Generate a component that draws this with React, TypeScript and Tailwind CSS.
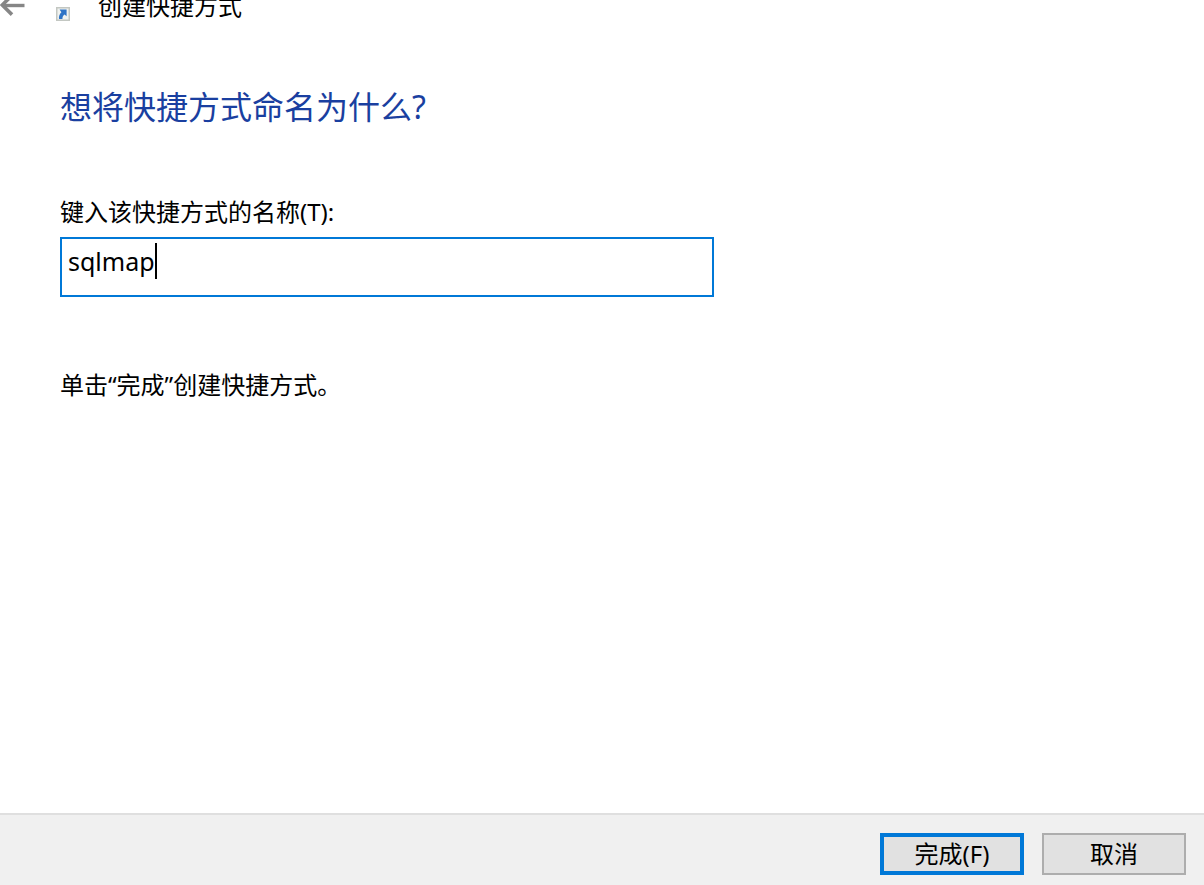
import { useState } from "react";

function BackArrow() {
  return (
    <svg width="26" height="20" viewBox="0 0 26 20" fill="none" stroke="#868686" className="block" aria-hidden="true">
      <path d="M24.5 5.5H3" strokeWidth="3.4" />
      <path d="M12.5 -5L2.2 5L12 14.6" strokeWidth="3.6" />
    </svg>
  );
}

function ShortcutIcon() {
  return (
    <svg width="14" height="14" viewBox="0 0 14 14" className="shrink-0" aria-hidden="true">
      <rect x="0.75" y="0.75" width="12.5" height="12.5" fill="#f1f3f0" stroke="#c3c7c2" strokeWidth="1.5" />
      <path d="M3.6 2.6H10.6V9.2L8.6 7.4C7.2 8.2 6.4 9.6 6.4 12H3C2.6 9.4 3.4 7.2 5.4 5.2Z" fill="#2f74c6" />
    </svg>
  );
}

export default function App() {
  const [name, setName] = useState("sqlmap");

  return (
    <div className="flex min-h-screen flex-col overflow-hidden bg-white font-['Noto_Sans','Noto_Sans_CJK_SC',sans-serif] text-2xl text-black">
      <header className="flex h-[22px] items-end overflow-hidden">
        <button type="button" aria-label="返回" className="flex h-[22px] w-14 items-start overflow-hidden">
          <BackArrow />
        </button>
        <div className="flex items-end pb-px">
          <ShortcutIcon />
        </div>
        <span className="ml-7 leading-8">创建快捷方式</span>
      </header>

      <main className="flex flex-1 flex-col px-[60px] pt-[61px]">
        <h1 className="text-[32px] leading-12 text-[#1a3fa0]">想将快捷方式命名为什么?</h1>
        <label htmlFor="shortcut-name" className="mt-[65px] leading-8">
          键入该快捷方式的名称(T):
        </label>
        <div className="mt-[9px] flex h-[60px] w-full max-w-[654px] items-start border-2 border-[#0078d7] pl-1.5 pt-1">
          <input
            id="shortcut-name"
            type="text"
            value={name}
            onChange={(e) => setName(e.target.value)}
            className="h-9 max-w-full text-[25px] leading-9 caret-transparent outline-none [field-sizing:content]"
          />
          <span className="h-9 w-0.5 shrink-0 bg-black" />
        </div>
        <p className="mt-[72px] leading-8">单击“完成”创建快捷方式。</p>
      </main>

      <footer className="flex h-[72px] justify-end gap-[18px] border-t-2 border-[#dfdfdf] bg-[#f0f0f0] pr-[18px] pt-[18px]">
        <button type="button" className="h-[42px] w-36 border-4 border-[#0078d7] bg-[#e1e1e1] leading-8">
          完成(F)
        </button>
        <button type="button" className="h-[42px] w-36 border-2 border-[#adadad] bg-[#e1e1e1] leading-8">
          取消
        </button>
      </footer>
    </div>
  );
}
